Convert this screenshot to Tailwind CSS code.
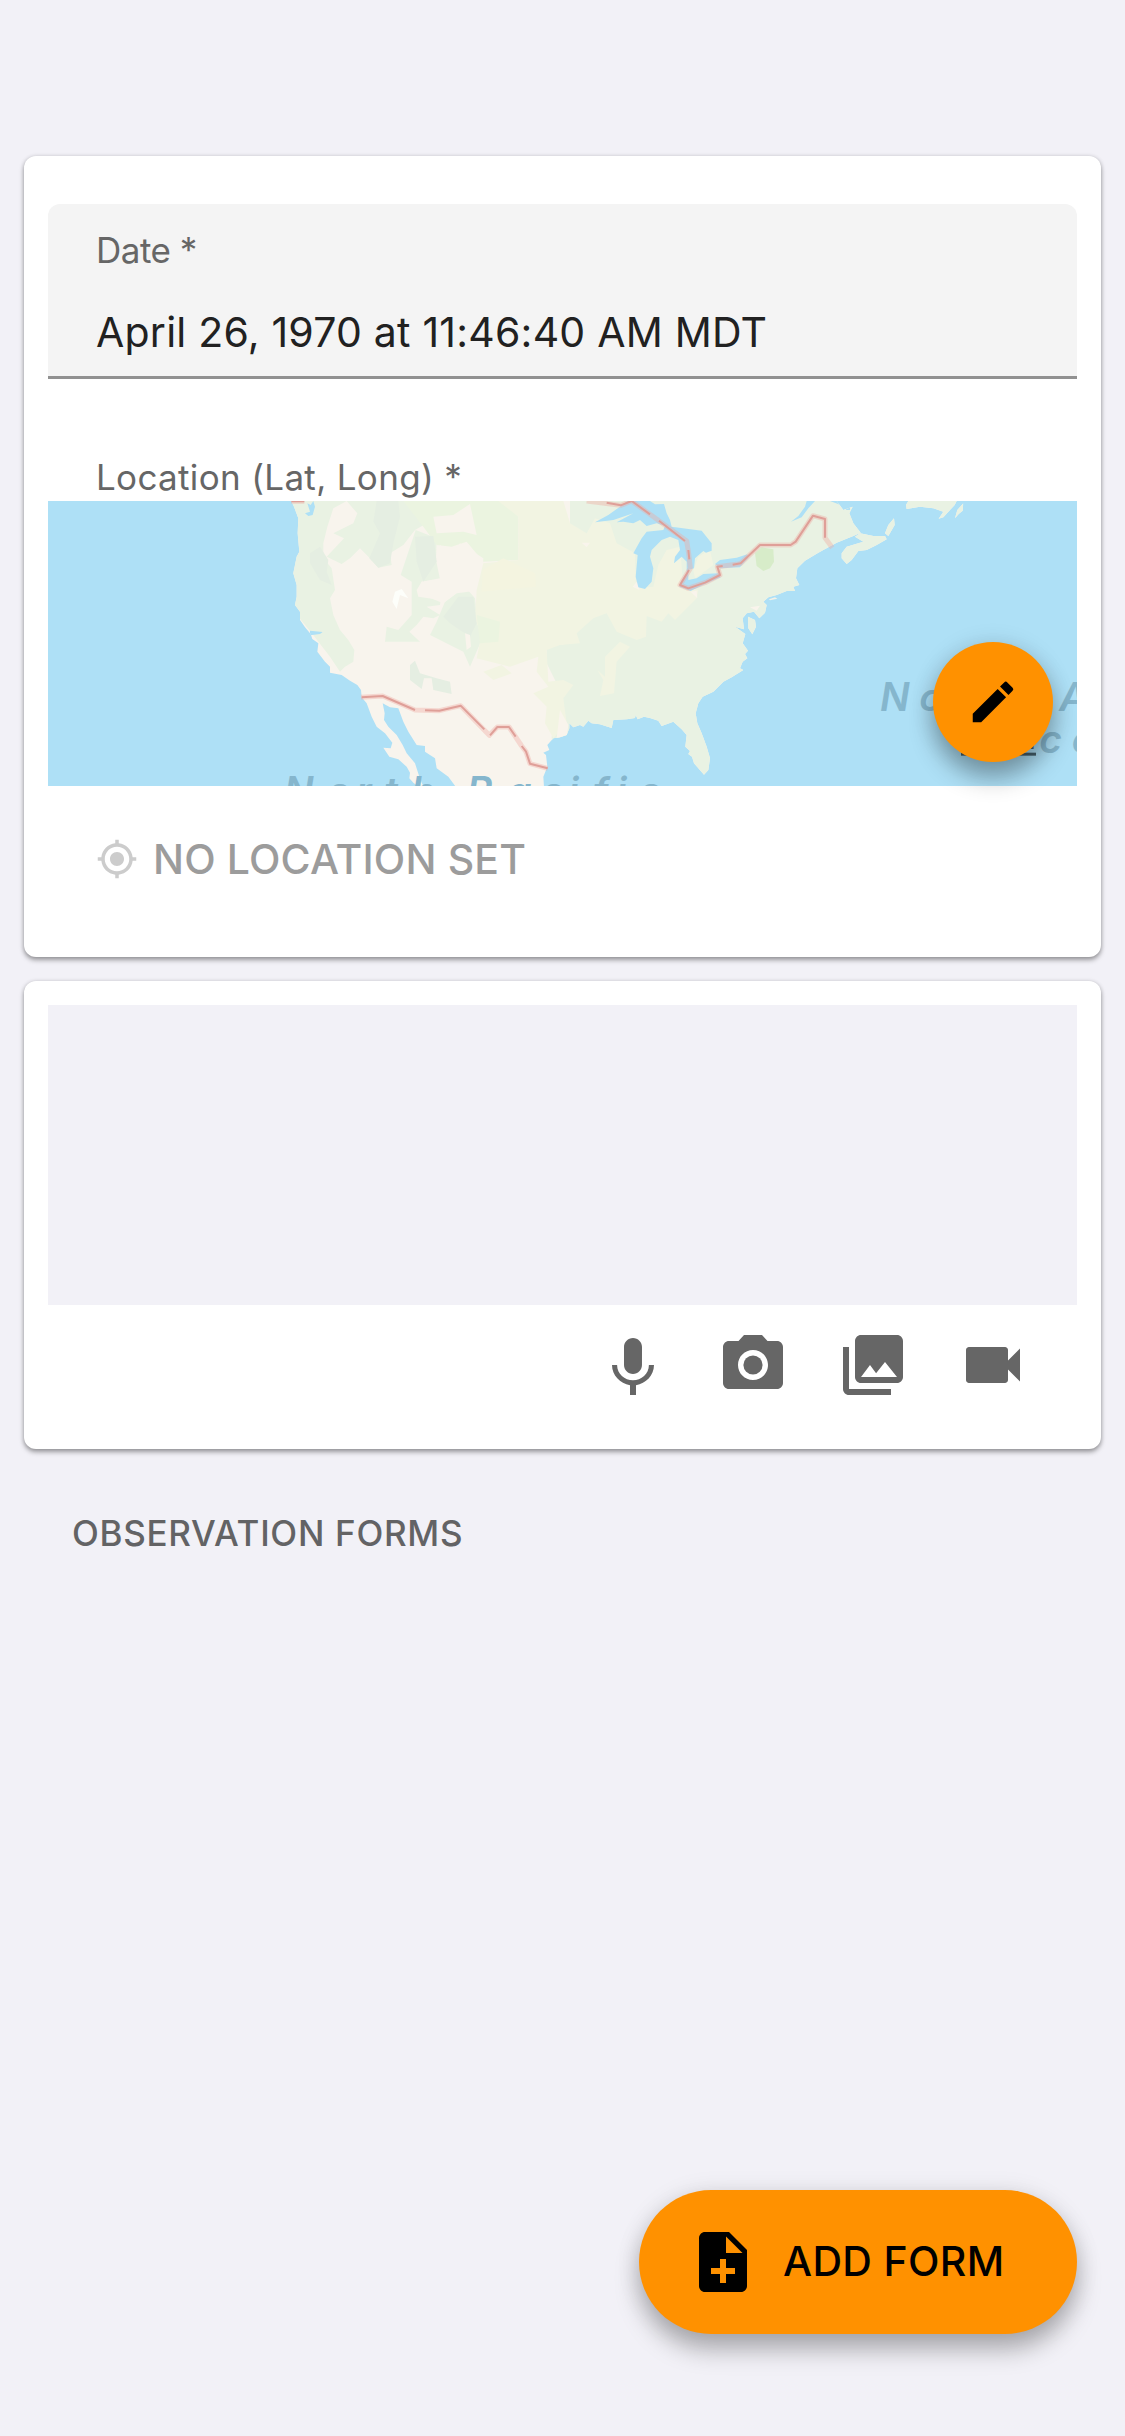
<!DOCTYPE html>
<html lang="en">
<head>
<meta charset="utf-8">
<title>Observation</title>
<script src="https://cdn.jsdelivr.net/npm/@tailwindcss/browser@4"></script>
</head>
<body class="bg-[#f2f1f7] font-['Inter',sans-serif]">
<div class="flex h-[2436px] w-[1125px] flex-col px-6 pt-[156px] pb-[102px]">
  <main class="flex flex-col gap-6">
    <section class="h-[801px] rounded-xl bg-white px-6 pt-12 shadow-[0_3px_5px_rgba(0,0,0,0.36),0_0_4px_rgba(0,0,0,0.12)]">
      <div class="flex h-[175px] flex-col rounded-t-xl border-b-3 border-[#919191] bg-[#f4f4f4] px-12 pt-[24px] whitespace-nowrap">
        <label class="h-[44px] text-[35px] leading-[44px] tracking-[-0.5px] text-[#666]">Date *</label>
        <div class="mt-[35px] h-[50px] text-[41px] leading-[50px] tracking-[0.22px] text-[#212121]">April 26, 1970 at 11:46:40 AM MDT</div>
      </div>
      <div class="flex h-[122px] items-end px-12 whitespace-nowrap">
        <label class="h-[46px] text-[35px] leading-[44px] tracking-[0.33px] text-[#666]">Location (Lat, Long) *</label>
      </div>
      <div class="relative h-[285px]">
        <svg class="block h-[285px] w-full" viewBox="-666 33 3087 855" preserveAspectRatio="none">
          <defs>
            <clipPath id="land"><path d="M64 33L72 50 85 85 83 130 88 185 80 200 70 250 80 285 80 320 75 345 90 365 90 390 105 412 122 432 127 447 145 460 142 485 165 515 180 530 180 548 215 555 240 572 262 585 273 600 275 622 290 640 305 680 320 710 345 730 367 758 362 775 340 773 358 800 385 808 410 830 420 848 418 865 430 878 445 890 460 890 448 860 435 820 410 790 398 765 380 735 355 710 342 690 344 670 338 640 360 652 385 655 400 695 415 725 440 765 465 768 465 785 495 805 500 835 535 860 557 890 822 890 820 860 832 830 828 795 820 788 838 780 832 765 850 745 870 742 890 735 898 715 898 700 910 712 930 705 940 710 955 692 965 700 990 703 1025 714 1030 690 1070 688 1095 684 1097 675 1103 688 1122 680 1140 684 1165 692 1175 708 1210 695 1235 718 1250 735 1246 770 1260 783 1255 792 1266 800 1272 820 1302 854 1315 840 1320 805 1310 770 1295 730 1282 700 1277 670 1285 640 1298 620 1330 605 1360 575 1385 562 1420 540 1410 535 1418 515 1432 505 1425 492 1434 482 1418 460 1426 432 1395 410 1422 418 1418 385 1430 370 1452 365 1468 385 1485 368 1490 345 1480 335 1495 322 1520 315 1550 303 1575 303 1570 290 1588 285 1578 265 1582 235 1605 212 1645 188 1660 180 1700 158 1750 138 1772 128 1750 100 1738 70 1748 50 1720 60 1700 33Z"/><path d="M1434 380L1455 390 1458 410 1447 433 1435 415Z"/><path d="M1715 190L1730 170 1780 155 1755 140 1770 130 1810 138 1845 138 1850 148 1820 165 1790 180 1765 183 1745 210 1730 222 1715 205ZM1845 130L1855 105 1872 85 1874 105 1855 138ZM1908 45L1915 33 2060 33 2054 45 2040 60 2020 82 2006 86 2020 65 1990 55 1950 50 1910 57ZM2055 85L2062 60 2080 40 2078 62 2066 72Z"/></clipPath>
          </defs>
          <rect x="-666" y="33" width="3087" height="855" fill="#aee0f6"/>
          <g clip-path="url(#land)">
            <rect x="0" y="33" width="2421" height="855" fill="#f8f4ed"/>
            <g fill="#e9f2e3">
              <path d="M60 33H230L190 55 172 110 160 160 160 205 185 235 195 300 180 325 190 375 210 420 235 450 253 480 250 515 225 530 210 545 180 500 122 425 60 350Z"/>
              <path d="M230 33H430L470 100 435 120 400 165 360 190 365 225 325 233 300 205 270 175 240 205 215 222 170 200 222 145 190 130 250 100 262 70Z"/>
              <path d="M437 120L500 145 498 210 510 268 455 275 440 300 445 320 512 330 510 345 470 350 510 375 490 385 460 380 440 405 418 425 450 455 345 455 350 410 385 420 425 375 425 275 392 255Z"/>
              <path d="M525 335L585 290 615 325 622 400 635 450 600 530 580 485 480 435 500 395Z"/>
              <path d="M430 33H2421V888H850L845 740 870 600 830 520 830 470 900 460V33Z"/>
            </g>
            <path fill="#ebf4e0" d="M400 33H700L745 80V210L640 215 590 155 545 170 500 165 460 110Z"/>
            <path fill="#f8f4ed" d="M490 80L550 75 600 42 620 135 580 125 500 130Z"/>
            <path fill="#f8f4ed" d="M510 165L545 195 570 160 640 205 635 300 560 310 520 340 445 310 455 275 510 265Z"/>
            <path fill="#f2f4e2" d="M685 33H880L900 100 950 130 975 85 1020 100 1040 160 1095 190 1098 295 1150 290 1165 225 1190 180 1230 170 1240 290 1285 300 1280 325 1215 390 1195 370 1175 395 1130 378 1128 440 1100 450 1040 425 1010 370 970 385 920 430 930 460 870 465 830 480 835 575 880 570 910 585 880 625 890 700 850 745 825 700 830 650 790 610 835 590 800 545 805 500 720 530 620 505 635 430 615 390 620 300 640 220 745 210 745 80Z"/>
            <path fill="#ebf4e0" d="M620 375L690 395 685 455 630 460Z"/>
            <path fill="#f4f4e0" d="M638 240L700 205 795 250 798 290 635 305Z"/>
            <path fill="#f2f4e2" d="M640 545L695 525 725 550 670 570ZM1005 500L1050 455 1080 470 1040 515 1032 610 990 618 1000 570 982 540 1005 560ZM1270 240L1285 200 1320 180 1330 225 1275 265Z"/>
            <g fill="#e5eee2">
              <path d="M320 33H385L390 80 370 160 360 220 325 233 298 205 330 130 310 95ZM120 190L150 170 175 210 170 245 185 285 150 270 120 220ZM435 140L490 138 500 215 460 275 440 215ZM565 320L610 320 620 400 600 440 540 400 520 380Z"/>
              <path d="M420 525L435 512 450 550 500 565 540 575 545 612 490 600 485 565 462 565 455 597 420 570Z"/>
            </g>
            <path fill="#fdfefa" d="M375 305L395 297 415 325 390 315 380 357 367 335Z"/>
            <path fill="#f9f4ec" d="M585 430L600 435 603 470 590 480ZM870 660L895 705 890 745 860 745ZM1088 290L1105 270 1108 300ZM1262 305L1280 302 1282 325ZM1440 352L1470 347 1460 362ZM935 158L960 158 950 172Z"/>
            <path fill="#d7ecc9" d="M1455 190L1475 172 1510 178 1512 215 1500 235 1480 243 1460 228Z"/>
            <g fill="#aee0f6">
              <path d="M975 97L1015 75 1050 50 1072 33H1140L1155 43 1182 42 1190 70 1200 90 1205 110 1295 122 1325 160 1325 182 1308 188 1300 183 1275 205 1272 235 1255 240 1255 270 1280 265 1300 252 1345 250 1352 262 1310 280 1262 303 1228 290 1232 275 1250 250 1250 215 1235 200 1212 220 1215 200 1230 180 1225 150 1200 140 1175 150 1145 180 1140 200 1150 235 1145 275 1125 297 1105 292 1097 260 1103 195 1090 190 1115 145 1130 125 1180 120 1185 108 1160 100 1130 108 1110 90 1090 100 1060 95 1040 97 1090 70 1030 90Z"/>
              <path d="M1335 222L1350 210 1400 203 1432 193 1435 203 1410 232 1350 235Z"/>
              <path d="M1610 33H1635L1615 55 1595 82 1563 95 1585 78 1605 50ZM1680 33H1740V60L1730 60 1712 45ZM112 40L122 45 130 33 135 50 128 75 115 78 105 70 120 65ZM120 422L158 426 150 432 120 436Z"/>
            </g>
          </g>
          <path fill="#f3f2e9" d="M1497 328L1515 322 1522 326 1500 331Z"/>
          <g fill="none" stroke-linejoin="round">
            <path stroke="#f0a8a0" stroke-opacity=".38" stroke-width="15" d="M64 34L103 34M273 622L338 618 435 660 508 662 572 647 658 736 682 711 717 711 755 768 768 785 780 821 833 835M950 33L1052 46 1085 33M1085 33L1140 73 1250 153 1256 190 1261 235 1230 285 1255 295 1305 278 1350 255 1342 230 1400 223 1412 220 1470 165 1562 165 1577 155 1629 77 1665 87 1665 143 1687 173"/>
            <path stroke="#df9f98" stroke-width="6" d="M64 34L103 34M275 622L338 618 435 660M465 661L508 662 572 647 643 718M660 736L682 711 717 711 737 740M755 768L768 785 780 821 833 835M1010 38L1052 46 1085 33 1140 73M1167 92L1245 153M1255 180L1258 208M1257 240L1230 285 1255 295 1305 278 1350 255 1342 230 1358 228M1388 224L1412 220 1470 165 1562 165 1577 155 1629 77 1665 87 1665 143"/>
          </g>
          <g class="font-['Inter',sans-serif] italic" font-size="117" font-weight="600" fill="#85b6cd">
            <text y="946" x="42 170 258 342 424 590 712 812 895 968 1039 1105">NorthPacific</text>
            <text y="663" x="1830 1948">No</text><text y="663" x="2368">A</text>
            <text y="788" x="2308 2405">ce</text>
          </g>
          <g fill="#46606c"><text class="font-['Inter',sans-serif]" font-size="92" x="2073" y="778" textLength="225">Legal</text><rect x="2073" y="788" width="225" height="9"/></g>
        </svg>
        <button class="absolute top-[141px] right-6 flex size-[120px] items-center justify-center rounded-full bg-[#ff9100] shadow-[0_16px_24px_rgba(0,0,0,0.3),0_2px_24px_rgba(0,0,0,0.12)]">
          <svg class="size-[54px]" viewBox="0 0 24 24"><path d="M3 17.25V21h3.75L17.81 9.94l-3.75-3.75L3 17.25zM20.71 7.04a1 1 0 0 0 0-1.41l-2.34-2.34a1 1 0 0 0-1.41 0l-1.83 1.83 3.75 3.75 1.83-1.83z"/></svg>
        </button>
      </div>
      <div class="mt-[48px] flex h-[50px] items-center gap-[15px] pl-12 whitespace-nowrap">
        <svg class="size-[42px]" viewBox="0 0 24 24" fill="#ccc"><path d="M12 8c-2.21 0-4 1.79-4 4s1.79 4 4 4 4-1.79 4-4-1.79-4-4-4zm8.94 3c-.46-4.17-3.77-7.48-7.94-7.94V1h-2v2.06C6.83 3.52 3.52 6.83 3.06 11H1v2h2.06c.46 4.17 3.77 7.48 7.94 7.94V23h2v-2.06c4.17-.46 7.48-3.77 7.94-7.94H23v-2h-2.06zM12 19c-3.87 0-7-3.13-7-7s3.13-7 7-7 7 3.13 7 7-3.13 7-7 7z"/></svg>
        <span class="text-[41px] leading-[50px] font-medium tracking-[0.15px] text-[#9c9c9c]">NO LOCATION SET</span>
      </div>
    </section>
    <section class="h-[468px] rounded-xl bg-white p-6 shadow-[0_3px_5px_rgba(0,0,0,0.36),0_0_4px_rgba(0,0,0,0.12)]">
      <div class="h-[300px] bg-[#f2f1f7]"></div>
      <div class="mt-6 flex justify-end gap-12 pr-12">
        <svg class="size-[72px]" viewBox="0 0 24 24" fill="#666"><path d="M12 15c1.66 0 2.99-1.34 2.99-3L15 6c0-1.66-1.34-3-3-3S9 4.34 9 6v6c0 1.66 1.34 3 3 3zm5.3-3c0 3-2.54 5.1-5.3 5.1S6.7 15 6.7 12H5c0 3.42 2.72 6.23 6 6.72V22h2v-3.28c3.28-.48 6-3.3 6-6.72h-1.7z"/></svg>
        <svg class="size-[72px]" viewBox="0 0 24 24" fill="#666"><circle cx="12" cy="12" r="3.2"/><path d="M9 2L7.17 4H4c-1.1 0-2 .9-2 2v12c0 1.1.9 2 2 2h16c1.1 0 2-.9 2-2V6c0-1.1-.9-2-2-2h-3.17L15 2H9zm3 15c-2.76 0-5-2.24-5-5s2.24-5 5-5 5 2.24 5 5-2.24 5-5 5z"/></svg>
        <svg class="size-[72px]" viewBox="0 0 24 24" fill="#666"><path d="M22 16V4c0-1.1-.9-2-2-2H8c-1.1 0-2 .9-2 2v12c0 1.1.9 2 2 2h12c1.1 0 2-.9 2-2zm-11-4l2.03 2.71L16 11l4 5H8l3-4zM2 6v14c0 1.1.9 2 2 2h14v-2H4V6H2z"/></svg>
        <svg class="size-[72px]" viewBox="0 0 24 24" fill="#666"><path d="M17 10.5V7c0-.55-.45-1-1-1H4c-.55 0-1 .45-1 1v10c0 .55.45 1 1 1h12c.55 0 1-.45 1-1v-3.5l4 4v-11l-4 4z"/></svg>
      </div>
    </section>
  </main>
  <h2 class="mt-[62px] pl-12 text-[35px] leading-[44px] font-medium tracking-[0.7px] whitespace-nowrap text-[#636365]">OBSERVATION FORMS</h2>
  <button class="mt-auto mr-6 flex h-[144px] w-[438px] items-center gap-6 self-end rounded-full bg-[#ff9100] pl-12 whitespace-nowrap shadow-[0_16px_24px_rgba(0,0,0,0.27),0_2px_24px_rgba(0,0,0,0.1)]">
    <svg class="size-[72px]" viewBox="0 0 24 24"><path d="M14 2H6c-1.1 0-1.99.9-1.99 2L4 20c0 1.1.89 2 1.99 2H18c1.1 0 2-.9 2-2V8l-6-6zm2 14h-3v3h-2v-3H8v-2h3v-3h2v3h3v2zm-3-7V3.5L18.5 9H13z"/></svg>
    <span class="text-[41px] font-medium tracking-[0.35px] text-black">ADD FORM</span>
  </button>
</div>
</body>
</html>
